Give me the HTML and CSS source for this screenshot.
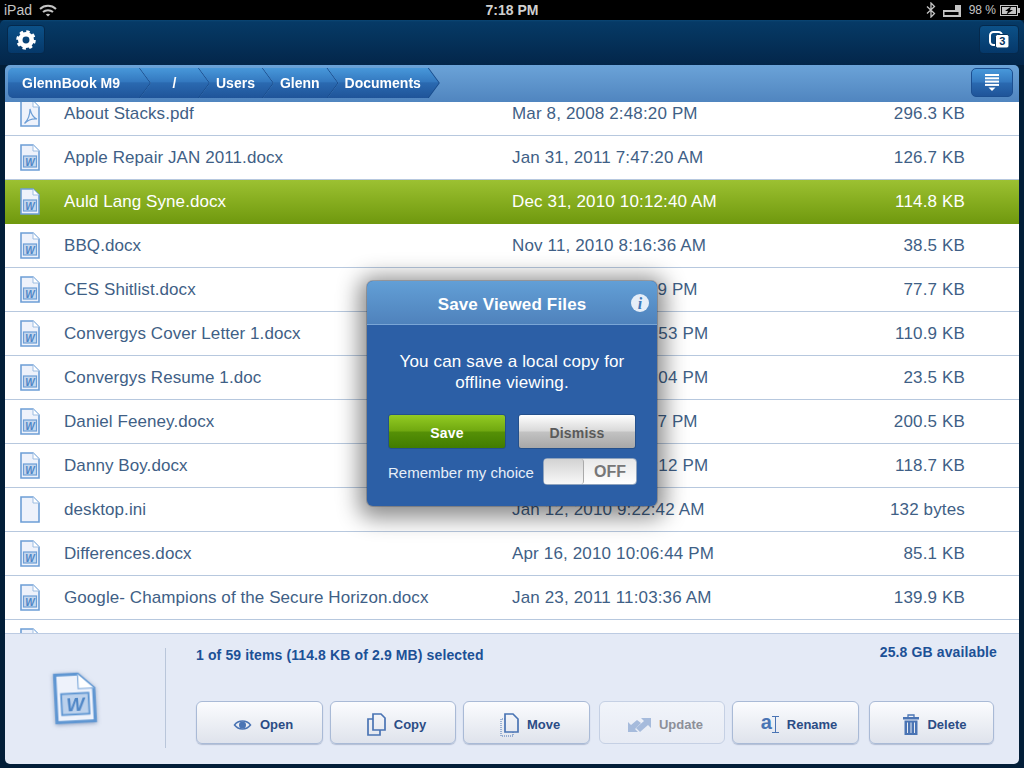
FILE: index.html
```html
<!DOCTYPE html>
<html lang="en">
<head>
    <meta charset="UTF-8">
    <title>GoodReader files</title>
    <link rel="stylesheet" href="styles.css">
</head>
<body>
    <svg class="defs" width="0" height="0">
        <symbol id="page" viewBox="0 0 20 27">
            <path d="M1 1H13L19 7V26H1Z" fill="#eef2fb" stroke="#6d9ed6" stroke-width="1.6"/>
            <path d="M13 1V7H19" fill="#fff" stroke="#9dbde2" stroke-width="1"/>
        </symbol>
        <symbol id="word" viewBox="0 0 20 27">
            <path d="M1 1H13L19 7V26H1Z" fill="#eef2fb" stroke="#6d9ed6" stroke-width="1.6"/>
            <path d="M13 1V7H19" fill="#fff" stroke="#9dbde2" stroke-width="1"/>
            <rect x="3.5" y="12" width="13" height="11" fill="#c3d6ee" stroke="#6d9ed6" stroke-width="1.2"/>
        </symbol>
    </svg>

    <div class="statusbar">
        <div class="status-left">
            <span>iPad</span>
            <svg width="18" height="13" viewBox="0 0 18 13" fill="none" stroke="#c4c4c4" stroke-width="2"><path d="M1 5C5.500 .8 12.500 .8 17 5"/><path d="M4 8C6.800 5.500 11.200 5.500 14 8"/><path d="M9 12.500L6.800 10.400C8 9.400 10 9.400 11.200 10.400Z" fill="#c4c4c4" stroke="none"/></svg>
        </div>
        <div class="status-time">7:18 PM</div>
        <div class="status-right">
            <svg width="10" height="16" viewBox="0 0 10 16" fill="none" stroke="#c4c4c4" stroke-width="1.300"><path d="M1 4.500L8.500 11.500L5 15V1L8.500 4.500L1 11.500"/></svg>
            <svg width="19" height="13" viewBox="0 0 19 13"><rect x="0" y="6" width="18" height="7" fill="#c4c4c4"/><rect x="1.500" y="8" width="14" height="3" fill="#000"/><rect x="12" y="1" width="6" height="5" fill="#c4c4c4"/></svg>
            <span class="battery-text">98 %</span>
            <svg class="battery" width="20" height="11" viewBox="0 0 20 11"><rect x=".5" y=".5" width="17" height="10" fill="none" stroke="#c4c4c4"/><rect x="2" y="2" width="14" height="7" fill="#c4c4c4"/><rect x="18" y="3" width="2" height="5" fill="#c4c4c4"/><path d="M11 1.500L5 6H8L6.500 9.500L13 5H10Z" fill="#000"/></svg>
        </div>
    </div>

    <div class="topbar">
        <button class="dark-btn gear-btn">
            <svg width="20" height="20" viewBox="0 0 22 22"><circle cx="11" cy="11" r="6.300" fill="none" stroke="#fff" stroke-width="5"/><circle cx="11" cy="11" r="9" fill="none" stroke="#fff" stroke-width="3.500" stroke-dasharray="3.600 3.470"/></svg>
        </button>
        <button class="dark-btn count-btn">
            <svg width="20" height="17" viewBox="0 0 20 17"><rect x="1" y="1" width="12" height="13" rx="3.500" fill="none" stroke="#fff" stroke-width="2"/><rect x="6.500" y="3.500" width="13.500" height="13.500" rx="2" fill="#fff" stroke="#04325c"/><text x="13.300" y="14.300" text-anchor="middle" class="count-num">3</text></svg>
        </button>
    </div>

    <div class="panel">
        <div class="pathbar">
            <div class="crumbs">
                <div class="crumb crumb-root">GlennBook M9</div>
                <div class="crumb crumb-slash">/</div>
                <div class="crumb">Users</div>
                <div class="crumb">Glenn</div>
                <div class="crumb">Documents</div>
            </div>
            <button class="menu-btn">
                <svg width="14" height="17" viewBox="0 0 14 17" fill="#fff"><rect x="0" y="0" width="14" height="2"/><rect x="0" y="3.300" width="14" height="2"/><rect x="0" y="6.600" width="14" height="2"/><rect x="0" y="9.900" width="14" height="2"/><path d="M3.500 13.500H10.500L7 17Z"/></svg>
            </button>
        </div>

        <div class="filelist">
            <div class="rows">
                <div class="row">
                    <svg class="file-icon" viewBox="0 0 20 27"><use href="#page"/><path d="M10 9C11.500 15 13 18 17 19C12 18.500 8 20 4.500 23.500C8 20 10 15 10 9Z" fill="none" stroke="#6d9ed6" stroke-width="1.200"/></svg>
                    <span class="name">About Stacks.pdf</span><span class="date">Mar 8, 2008 2:48:20 PM</span><span class="size">296.3 KB</span>
                </div>
                <div class="row"><svg class="file-icon" viewBox="0 0 20 27"><use href="#word"/><text x="10" y="21.500" text-anchor="middle" class="word-w">W</text></svg><span class="name">Apple Repair JAN 2011.docx</span><span class="date">Jan 31, 2011 7:47:20 AM</span><span class="size">126.7 KB</span></div>
                <div class="row selected"><svg class="file-icon" viewBox="0 0 20 27"><use href="#word"/><text x="10" y="21.500" text-anchor="middle" class="word-w">W</text></svg><span class="name">Auld Lang Syne.docx</span><span class="date">Dec 31, 2010 10:12:40 AM</span><span class="size">114.8 KB</span></div>
                <div class="row"><svg class="file-icon" viewBox="0 0 20 27"><use href="#word"/><text x="10" y="21.500" text-anchor="middle" class="word-w">W</text></svg><span class="name">BBQ.docx</span><span class="date">Nov 11, 2010 8:16:36 AM</span><span class="size">38.5 KB</span></div>
                <div class="row"><svg class="file-icon" viewBox="0 0 20 27"><use href="#word"/><text x="10" y="21.500" text-anchor="middle" class="word-w">W</text></svg><span class="name">CES Shitlist.docx</span><span class="date">Mar 8, 2010 2:48:29 PM</span><span class="size">77.7 KB</span></div>
                <div class="row"><svg class="file-icon" viewBox="0 0 20 27"><use href="#word"/><text x="10" y="21.500" text-anchor="middle" class="word-w">W</text></svg><span class="name">Convergys Cover Letter 1.docx</span><span class="date">Nov 18, 2010 8:16:53 PM</span><span class="size">110.9 KB</span></div>
                <div class="row"><svg class="file-icon" viewBox="0 0 20 27"><use href="#word"/><text x="10" y="21.500" text-anchor="middle" class="word-w">W</text></svg><span class="name">Convergys Resume 1.doc</span><span class="date">Nov 18, 2010 8:20:04 PM</span><span class="size">23.5 KB</span></div>
                <div class="row"><svg class="file-icon" viewBox="0 0 20 27"><use href="#word"/><text x="10" y="21.500" text-anchor="middle" class="word-w">W</text></svg><span class="name">Daniel Feeney.docx</span><span class="date">Mar 3, 2010 2:35:17 PM</span><span class="size">200.5 KB</span></div>
                <div class="row"><svg class="file-icon" viewBox="0 0 20 27"><use href="#word"/><text x="10" y="21.500" text-anchor="middle" class="word-w">W</text></svg><span class="name">Danny Boy.docx</span><span class="date">Dec 31, 2010 3:40:12 PM</span><span class="size">118.7 KB</span></div>
                <div class="row"><svg class="file-icon" viewBox="0 0 20 27"><use href="#page"/></svg><span class="name">desktop.ini</span><span class="date">Jan 12, 2010 9:22:42 AM</span><span class="size">132 bytes</span></div>
                <div class="row"><svg class="file-icon" viewBox="0 0 20 27"><use href="#word"/><text x="10" y="21.500" text-anchor="middle" class="word-w">W</text></svg><span class="name">Differences.docx</span><span class="date">Apr 16, 2010 10:06:44 PM</span><span class="size">85.1 KB</span></div>
                <div class="row"><svg class="file-icon" viewBox="0 0 20 27"><use href="#word"/><text x="10" y="21.500" text-anchor="middle" class="word-w">W</text></svg><span class="name">Google- Champions of the Secure Horizon.docx</span><span class="date">Jan 23, 2011 11:03:36 AM</span><span class="size">139.9 KB</span></div>
                <div class="row"><svg class="file-icon" viewBox="0 0 20 27"><use href="#page"/></svg></div>
            </div>
        </div>

        <div class="footer">
            <div class="preview">
                <svg width="42" height="54" viewBox="0 0 46 56" class="preview-icon">
                    <path d="M2 2H27L44 18V54H2Z" fill="#eef2fb" stroke="#5f96d2" stroke-width="3.500"/>
                    <path d="M27 2V18H44" fill="#fff" stroke="#8fb4df" stroke-width="1.500"/>
                    <rect x="8" y="23" width="30" height="23" fill="#bcd1ec" stroke="#5f96d2" stroke-width="2"/>
                    <text x="23" y="42" text-anchor="middle" class="preview-w">W</text>
                </svg>
            </div>
            <div class="details">
                <div class="info-line">
                    <span>1 of 59 items (114.8 KB of 2.9 MB) selected</span>
                    <span class="available">25.8 GB available</span>
                </div>
                <div class="actions">
                    <button class="action">
                        <svg width="19" height="12" viewBox="0 0 18 12"><path d="M1 6C5 .8 13 .8 17 6C13 11.200 5 11.200 1 6Z" fill="none" stroke="#4a74b4" stroke-width="1.500"/><circle cx="9" cy="6" r="3.500" fill="#4a74b4"/></svg>
                        Open
                    </button>
                    <button class="action">
                        <svg width="19" height="23" viewBox="0 0 19 23" fill="none" stroke="#4a74b4" stroke-width="1.700"><path d="M6 1H14L18 5V17H6Z"/><path d="M6 6H1V22H13V17"/></svg>
                        Copy
                    </button>
                    <button class="action">
                        <svg width="19" height="24" viewBox="0 0 19 24" fill="none"><path d="M5 1H13L18 6V19H5Z" stroke="#4a74b4" stroke-width="1.700"/><path d="M5 6H1V23H13V19" stroke="#4a74b4" stroke-dasharray="1 1"/></svg>
                        Move
                    </button>
                    <button class="action action-disabled">
                        <svg width="23" height="14" viewBox="0 0 23 14" fill="#a6bbdc"><path d="M13 0H23V10L20 7L12 14L8 10L16 3Z"/><path d="M0 4L3 7L9 2L13 5L7 11L10 14H0Z"/></svg>
                        Update
                    </button>
                    <button class="action">
                        <span class="rename-a">a</span>
                        <svg class="rename-cursor" width="7" height="17" viewBox="0 0 7 17" fill="none" stroke="#4a74b4"><path d="M0 .5H7M3.500 .5V16.500M0 16.500H7"/></svg>
                        Rename
                    </button>
                    <button class="action">
                        <svg width="16" height="21" viewBox="0 0 16 21" fill="#4a74b4"><rect x="0" y="3" width="16" height="2.500"/><path d="M5 3V1H11V3" fill="none" stroke="#4a74b4" stroke-width="1.300"/><path d="M1.500 6.500H14.500V21H1.500ZM4 8.500V19H5V8.500ZM7.500 8.500V19H8.500V8.500ZM11 8.500V19H12V8.500Z" fill-rule="evenodd"/></svg>
                        Delete
                    </button>
                </div>
            </div>
        </div>
    </div>

    <div class="dialog">
        <div class="dialog-head">
            Save Viewed Files
            <svg class="info-icon" width="18" height="18" viewBox="0 0 18 18"><circle cx="9" cy="9" r="9" fill="#e6eef8"/><text x="9" y="14.500" text-anchor="middle" class="info-i">i</text></svg>
        </div>
        <div class="dialog-body">
            <p class="dialog-msg">You can save a local copy for offline viewing.</p>
            <div class="dialog-btns">
                <button class="dlg-btn dlg-save">Save</button>
                <button class="dlg-btn dlg-dismiss">Dismiss</button>
            </div>
            <div class="remember">
                <span class="remember-label">Remember my choice</span>
                <div class="toggle"><div class="knob"></div><span class="toggle-off">OFF</span></div>
            </div>
        </div>
    </div>
</body>
</html>
```

FILE: styles.css
```css
* {
    box-sizing: border-box;
}
html, body {
    margin: 0;
    height: 768px;
    overflow: hidden;
}
body {
    background-color: #021e38;
    font-family: "Liberation Sans", Arial, sans-serif;
    position: relative;
}
button {
    font-family: inherit;
    padding: 0;
}
.defs {
    position: absolute;
}
.word-w {
    font-family: "Liberation Sans", Arial, sans-serif;
    font-weight: bold;
    font-style: italic;
    font-size: 10px;
    letter-spacing: 0;
    fill: #4f86c6;
}

/* status bar */
.statusbar {
    height: 20px;
    background-color: #000;
    color: #c4c4c4;
    font-size: 14px;
    display: grid;
    grid-template-columns: 1fr auto 1fr;
    align-items: center;
    padding: 0 4px;
}
.status-left {
    display: flex;
    align-items: center;
    gap: 7px;
}
.status-time {
    font-weight: bold;
    color: #d0d0d0;
}
.status-right {
    display: flex;
    align-items: center;
    justify-content: flex-end;
    gap: 7px;
}
.battery-text {
    font-size: 12px;
}
.battery {
    margin-left: -3px;
}

/* top bar */
.topbar {
    height: 45px;
    border-radius: 5px 5px 0 0;
    background: linear-gradient(#0b4674 0, #063a66 2px, #03264a 100%);
    display: flex;
    justify-content: space-between;
    align-items: flex-start;
    padding: 5px 5px 0 7px;
}
.dark-btn {
    height: 29px;
    border: 1px solid #05294c;
    border-radius: 4px;
    background: linear-gradient(#0c5188, #05386a);
    display: flex;
    align-items: center;
    justify-content: center;
}
.gear-btn {
    width: 38px;
}
.count-btn {
    width: 40px;
}
.count-num {
    font-family: "Liberation Sans", Arial, sans-serif;
    font-weight: bold;
    font-size: 11px;
    fill: #04325c;
}

/* main panel */
.panel {
    margin: 0 5px;
    height: 699px;
    border-radius: 5px;
    overflow: hidden;
    display: flex;
    flex-direction: column;
}
.pathbar {
    height: 37px;
    flex: none;
    background: linear-gradient(#6ba3d8, #5085bf);
    display: flex;
    justify-content: space-between;
    align-items: flex-start;
    padding: 3px 6px 0 3px;
}
.crumbs {
    display: flex;
    height: 30px;
}
.crumb {
    position: relative;
    height: 30px;
    line-height: 31px;
    padding: 0 18px 0 17px;
    margin-left: -10px;
    color: #fff;
    font-size: 14px;
    font-weight: bold;
    filter: drop-shadow(1px 0 0 #174a8a);
}
.crumb::before {
    content: "";
    position: absolute;
    inset: 0;
    z-index: -1;
    background: linear-gradient(#4898da 0, #3479c0 45%, #2a69b0 50%, #1f5499 100%);
    clip-path: polygon(0 0, calc(100% - 11px) 0, 100% 50%, calc(100% - 11px) 100%, 0 100%, 11px 50%);
}
.crumb-root {
    width: 142px;
    margin-left: 0;
    padding: 0 0 0 14px;
}
.crumb-root::before {
    border-radius: 5px;
    clip-path: polygon(0 0, calc(100% - 11px) 0, 100% 50%, calc(100% - 11px) 100%, 0 100%);
}
.crumb-slash {
    width: 69px;
    padding: 0;
    text-align: center;
}
.menu-btn {
    width: 42px;
    height: 29px;
    border: 1px solid #1c4f91;
    border-radius: 5px;
    background: linear-gradient(#4898da 0, #3479c0 48%, #2a69b0 52%, #1f5499 100%);
    display: flex;
    align-items: center;
    justify-content: center;
}

/* file list */
.filelist {
    flex: 1;
    min-height: 0;
    background-color: #fff;
    overflow: hidden;
}
.rows {
    margin-top: -10px;
}
.row {
    height: 44px;
    border-bottom: 1px solid #b7c8de;
    display: flex;
    align-items: center;
    padding-left: 15px;
    color: #3f5f86;
    font-size: 17px;
    letter-spacing: .08px;
}
.row.selected {
    background: linear-gradient(#9cc132 0, #86ad1f 50%, #70990f 100%);
    color: #fff;
    border-bottom-color: #70990f;
}
.file-icon {
    width: 20px;
    height: 27px;
    margin-right: 24px;
    flex: none;
}
.name {
    width: 448px;
    flex: none;
}
.date {
    width: 363px;
    flex: none;
    letter-spacing: .15px;
}
.size {
    width: 90px;
    flex: none;
    text-align: right;
    letter-spacing: .15px;
}

/* footer */
.footer {
    height: 131px;
    flex: none;
    background-color: #e4eaf6;
    border-top: 1px solid #bccbe2;
    display: flex;
}
.preview {
    width: 161px;
    height: 100px;
    margin-top: 14px;
    border-right: 1px solid #b9c6da;
    display: flex;
    align-items: center;
    justify-content: center;
    padding: 0 20px 0 0;
    flex: none;
}
.preview-icon {
    transform: rotate(-3deg);
    filter: drop-shadow(0 1px 2px rgba(60, 90, 140, .5));
}
.preview-w {
    font-family: "Liberation Sans", Arial, sans-serif;
    font-weight: bold;
    font-style: italic;
    font-size: 21px;
    fill: #4f86c6;
}
.details {
    flex: 1;
    padding: 13px 0 0 30px;
}
.info-line {
    display: flex;
    justify-content: space-between;
    height: 54px;
    color: #1c5196;
    font-size: 14px;
    font-weight: bold;
    letter-spacing: .12px;
    padding-right: 22px;
}
.available {
    margin-top: -3px;
}
.actions {
    display: flex;
    gap: 7px;
}
.action {
    width: 127px;
    height: 43px;
    border: 1px solid #a9bad6;
    border-radius: 6px;
    background: linear-gradient(#fbfcfe, #dfe3ec);
    box-shadow: 0 1px 1px rgba(90, 110, 150, .35);
    color: #2b4c85;
    font-size: 13px;
    font-weight: bold;
    display: flex;
    align-items: center;
    justify-content: center;
    gap: 8px;
    padding: 4px 0 0 7px;
}
.action:nth-child(2) {
    width: 126px;
}
.action:nth-child(4) {
    width: 126px;
    margin-left: 2px;
}
.action:nth-child(6) {
    width: 125px;
    margin-left: 3px;
}
.action-disabled {
    background: linear-gradient(#f1f4fa, #e7ebf4);
    color: #8c8f99;
    border-color: #c5d0e4;
    box-shadow: none;
}
.rename-a {
    color: #4a74b4;
    font-size: 20px;
    line-height: 1;
    margin-top: -5px;
}
.rename-cursor {
    margin-left: -8px;
}

/* dialog over the list */
.dialog {
    position: absolute;
    left: 367px;
    top: 281px;
    width: 290px;
    height: 225px;
    border-radius: 6px;
    background-color: #2c5fa6;
    box-shadow: 0 0 0 1px rgba(30, 40, 60, .25), 0 4px 22px 8px rgba(0, 0, 0, .45);
    color: #fff;
}
.dialog-head {
    position: relative;
    height: 44px;
    border-radius: 6px 6px 0 0;
    background: linear-gradient(#629fd6, #4f82bc);
    border-bottom: 1px solid #7aa6d6;
    font-size: 17px;
    font-weight: bold;
    letter-spacing: .15px;
    text-align: center;
    line-height: 47px;
}
.info-icon {
    position: absolute;
    right: 8px;
    top: 13px;
}
.info-i {
    font-family: "Liberation Serif", serif;
    font-style: italic;
    font-weight: bold;
    font-size: 16px;
    fill: #3f78b8;
}
.dialog-body {
    padding: 26px 21px 0;
}
.dialog-msg {
    margin: 0 auto;
    width: 248px;
    text-align: center;
    font-size: 17px;
    line-height: 21px;
    letter-spacing: .15px;
}
.dialog-btns {
    display: flex;
    justify-content: space-between;
    margin-top: 21px;
}
.dlg-btn {
    width: 118px;
    height: 35px;
    border: 1px solid #24508c;
    border-radius: 3px;
    font-size: 14px;
    font-weight: bold;
    letter-spacing: .2px;
    padding-top: 2px;
}
.dlg-save {
    background: linear-gradient(#93cb23 0, #70a810 48%, #559006 52%, #417c00 100%);
    color: #fff;
}
.dlg-dismiss {
    background: linear-gradient(#fefefe 0, #d9d9d9 48%, #c2c2c2 52%, #a8a8a8 100%);
    color: #5a5a5a;
}
.remember {
    display: flex;
    justify-content: space-between;
    align-items: center;
    margin: 9px -1px 0 0;
    font-size: 15px;
    color: #e6eef8;
}
.remember-label {
    margin-top: 2px;
}
.toggle {
    width: 94px;
    height: 27px;
    border: 1px solid #8fa3bd;
    border-radius: 4px;
    background: linear-gradient(#e8e8e8, #ffffff);
    display: flex;
    align-items: center;
}
.knob {
    width: 40px;
    height: 25px;
    border-right: 1px solid #aaa;
    border-radius: 3px;
    background: linear-gradient(#d2d2d2, #f8f8f8);
}
.toggle-off {
    flex: 1;
    text-align: center;
    color: #777;
    font-size: 16px;
    font-weight: bold;
}
```
